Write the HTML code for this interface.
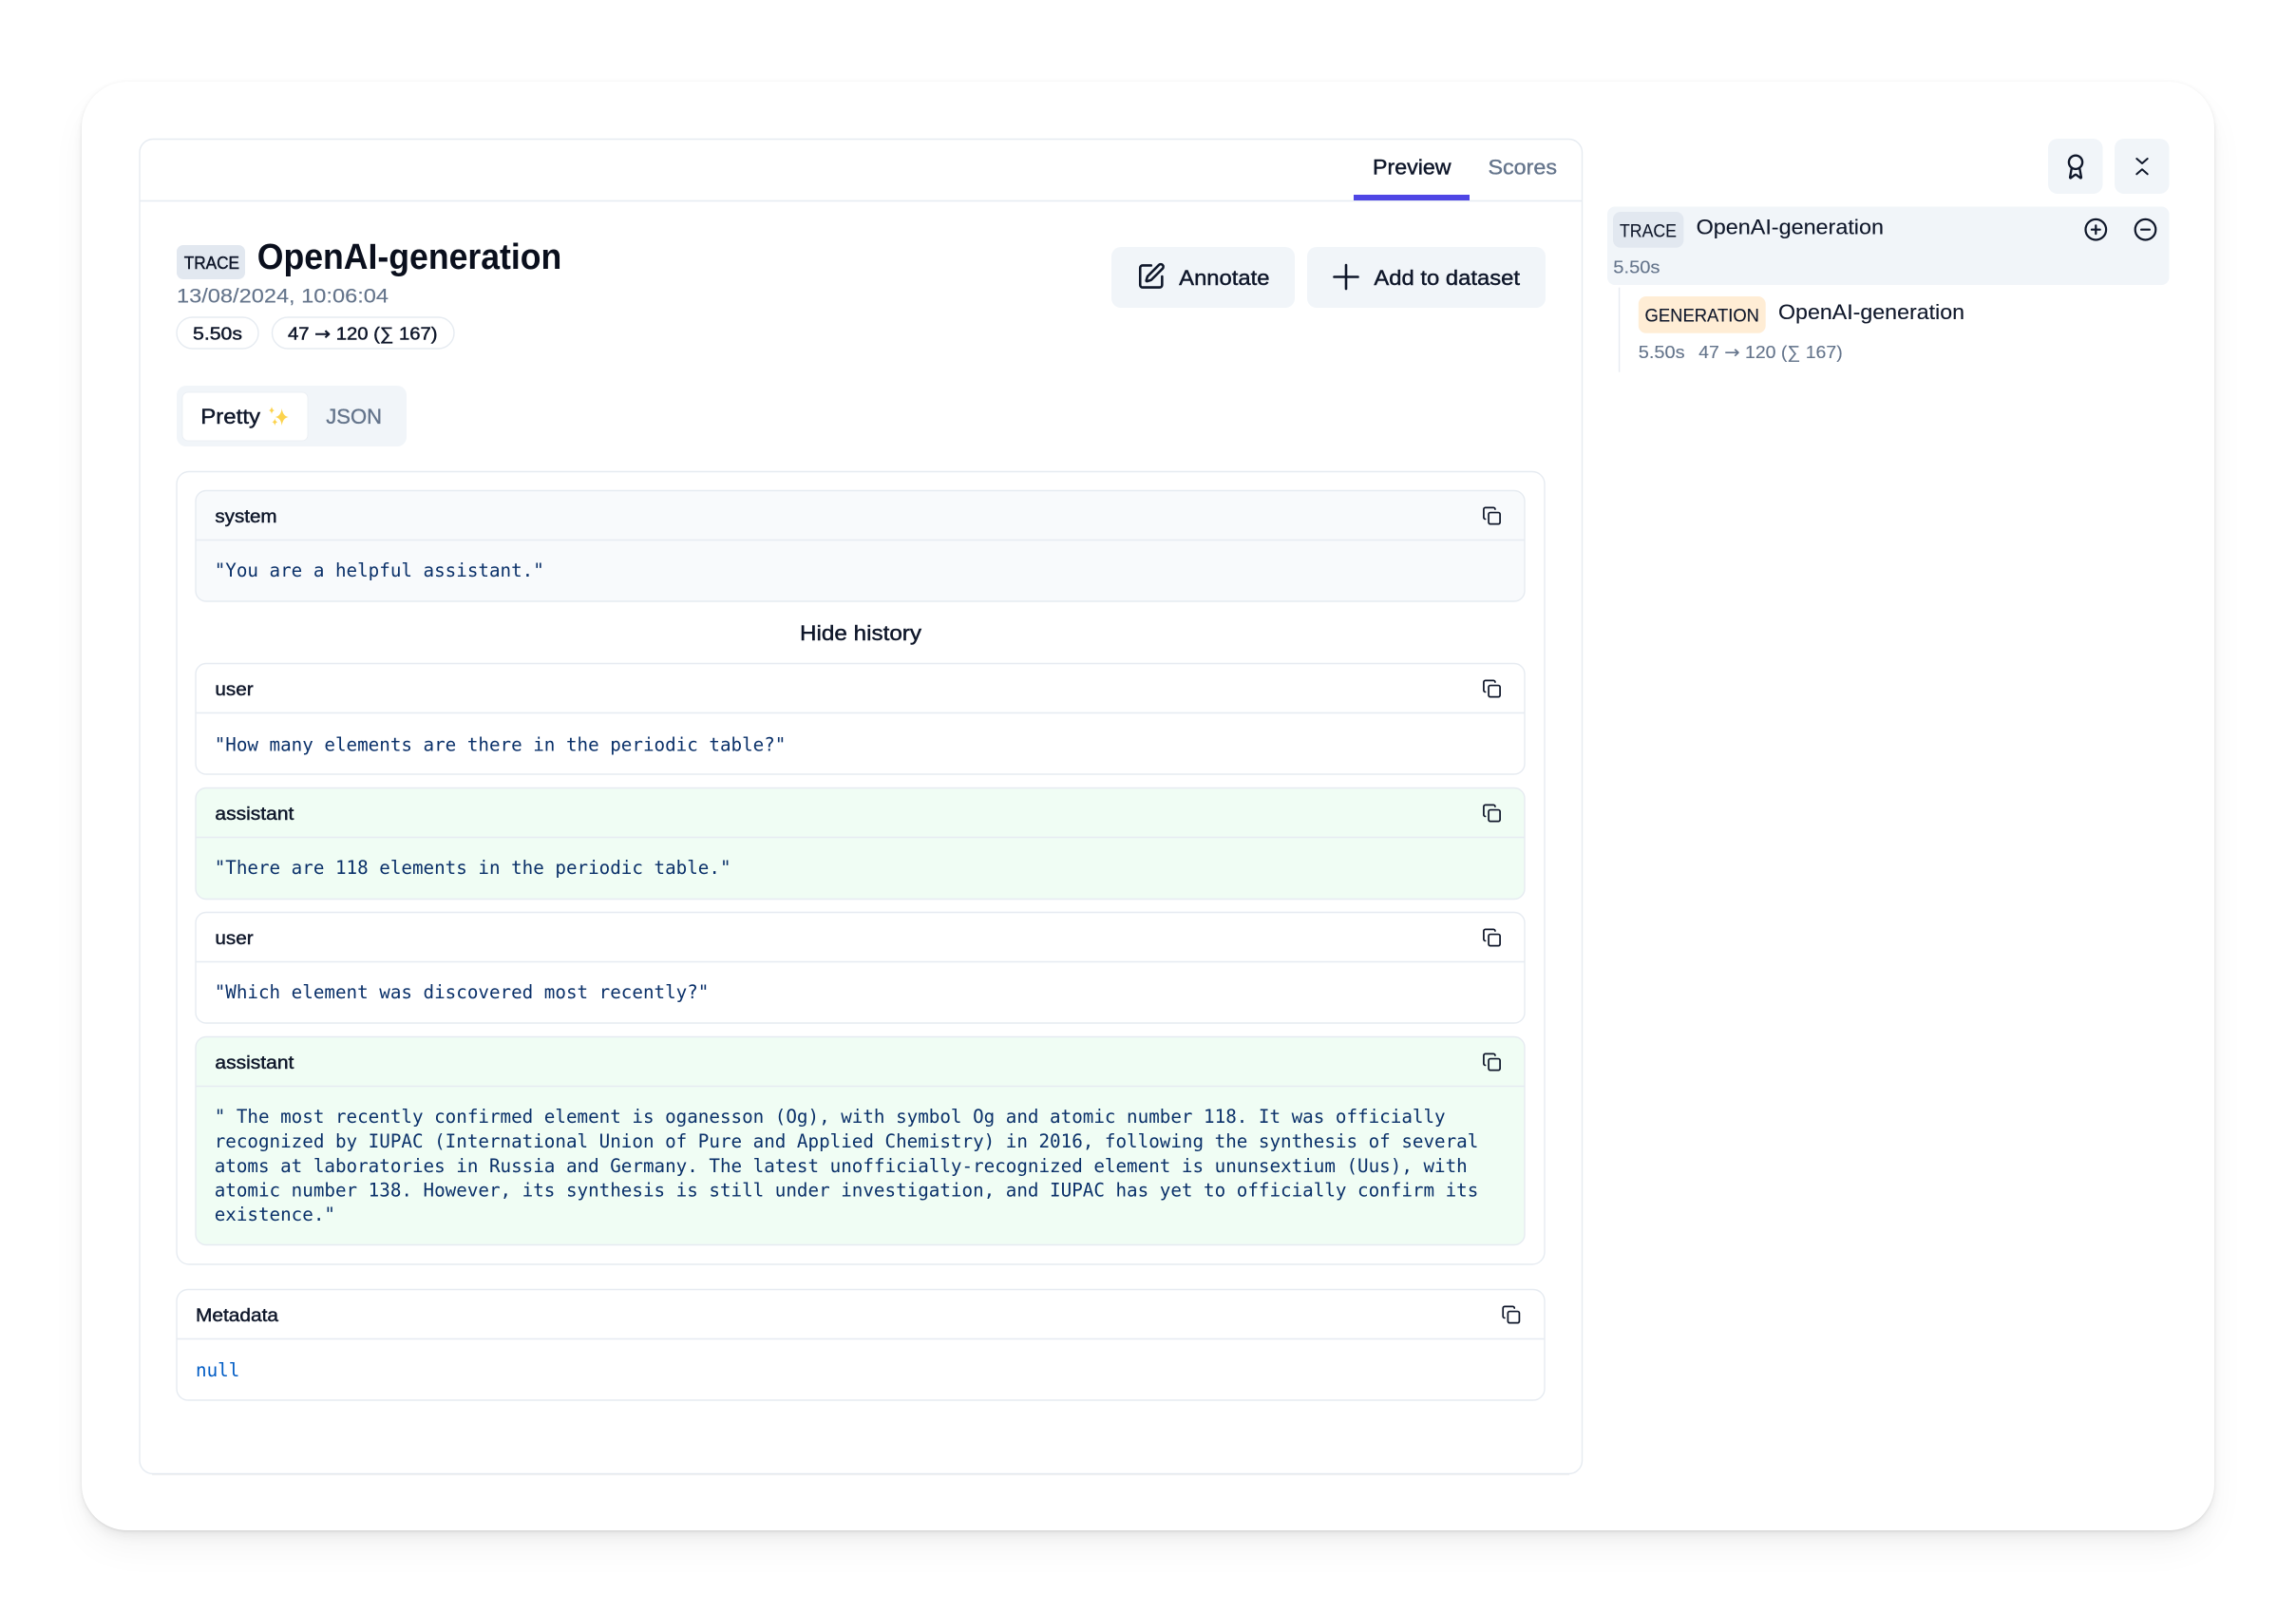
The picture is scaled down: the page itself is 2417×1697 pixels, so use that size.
<!DOCTYPE html>
<html lang="en"><head><meta charset="utf-8"><title>Trace</title>
<style>
html,body{margin:0;padding:0;background:#fff;width:2417px;height:1697px;overflow:hidden}
#card{position:absolute;left:86px;top:86px;width:2245px;height:1525px;border-radius:48px;background:#fff;box-shadow:0 1px 2px rgba(0,0,0,.07),0 0 6px rgba(0,0,0,.035),0 7px 12px -2px rgba(0,0,0,.07),0 20px 40px -4px rgba(0,0,0,.05)}
svg{position:absolute;left:0;top:0}
text{font-family:"Liberation Sans",sans-serif;fill:#0f172a;font-size:22.4px;stroke:#0f172a;stroke-width:.12px}
.m{stroke:#0f172a;stroke-width:.45px}
.s{font-size:18.5px}
.l{font-size:19.2px}
.d{font-size:21.6px}
.g{fill:#64748b;stroke:#64748b}
.gm{fill:#64748b;stroke:#64748b;stroke-width:.35px}
.c{font-family:"DejaVu Sans Mono","Liberation Mono",monospace;font-size:19.23px;fill:#0a3069;stroke:none}
.n{fill:#005cc5}
.a{font-family:"DejaVu Sans",sans-serif}
.box{fill:#fff;stroke:#e6ebf1;stroke-width:1.4}
.line{stroke:#e6ebf1;stroke-width:1.4}
.ic{fill:none;stroke:#0f172a;stroke-width:2;stroke-linecap:round;stroke-linejoin:round}
</style></head><body>
<div id="card"></div>
<svg width="2417" height="1697" viewBox="0 0 2417 1697" xmlns="http://www.w3.org/2000/svg">
<defs>
<g id="copy"><g transform="scale(.86) translate(-12 -12)" class="ic"><rect x="8" y="8" width="14" height="14" rx="2"/><path d="M4 16c-1.100 0-2-.9-2-2V4c0-1.100.9-2 2-2h10c1.100 0 2 .9 2 2"/></g></g>
</defs>

<!-- main panel -->
<rect class="box" x="147" y="146.500" width="1518.500" height="1405" rx="14"/>
<line x1="160" y1="1552.500" x2="1652" y2="1552.500" stroke="#000" stroke-opacity=".035" stroke-width="1.500"/>
<line class="line" x1="147" y1="211.500" x2="1665.500" y2="211.500"/>
<rect x="1425" y="205" width="122" height="6" fill="#4f46e5"/>
<text class="m" x="1445" y="183.500" textLength="82.500" lengthAdjust="spacingAndGlyphs">Preview</text>
<text class="gm" x="1566.500" y="183.500" textLength="72.500" lengthAdjust="spacingAndGlyphs">Scores</text>

<!-- heading -->
<rect x="186" y="258" width="72" height="36" rx="7" fill="#e2e8f0"/>
<text class="m s" x="193.700" y="283" textLength="58.300" lengthAdjust="spacingAndGlyphs">TRACE</text>
<text x="270.800" y="283" style="font-size:38px;font-weight:700;fill:#0a0f1d;stroke:none" textLength="320.500" lengthAdjust="spacingAndGlyphs">OpenAI-generation</text>
<text class="g d" x="186" y="318.700" textLength="223" lengthAdjust="spacingAndGlyphs">13/08/2024, 10:06:04</text>
<rect class="box" x="186" y="334" width="86" height="33" rx="16.500"/>
<text class="m s" x="203" y="357.700" textLength="52" lengthAdjust="spacingAndGlyphs">5.50s</text>
<rect class="box" x="286.500" y="334" width="191.500" height="33" rx="16.500"/>
<text class="m s" x="303" y="357.700" textLength="157.500" lengthAdjust="spacingAndGlyphs">47 <tspan class="a">→</tspan> 120 (∑ 167)</text>

<!-- buttons -->
<rect x="1170" y="260" width="193" height="64" rx="10" fill="#f1f5f9"/>
<g transform="translate(1196.400 275.600) scale(1.283)" class="ic"><path d="M12 3H5a2 2 0 0 0-2 2v14a2 2 0 0 0 2 2h14a2 2 0 0 0 2-2v-7"/><path d="M18.375 2.625a1 1 0 0 1 3 3l-9.013 9.014a2 2 0 0 1-.853.505l-2.873.84a.5.5 0 0 1-.62-.62l.84-2.873a2 2 0 0 1 .506-.852z"/></g>
<text class="m" x="1241.200" y="300" textLength="95.300" lengthAdjust="spacingAndGlyphs">Annotate</text>
<rect x="1376" y="260" width="251" height="64" rx="10" fill="#f1f5f9"/>
<path d="M1404.500 291.500h25M1417 279v25" class="ic" style="stroke-width:2.600"/>
<text class="m" x="1446.400" y="300" textLength="153.600" lengthAdjust="spacingAndGlyphs">Add to dataset</text>

<!-- pretty / json -->
<rect x="186" y="406" width="242" height="64" rx="10" fill="#f1f5f9"/>
<rect x="192" y="413" width="132" height="51" rx="6" fill="#fff" stroke="#e9edf2" stroke-width=".8"/>
<text class="m" x="211.300" y="446" textLength="62.700" lengthAdjust="spacingAndGlyphs">Pretty</text>
<g fill="#fcd34d"><path d="M296.700 430q1 8 7 9q-6 1-7 9q-1-8-7-9q6-1 7-9z"/><path d="M286 428q.5 3.500 3 4q-2.500.5-3 4q-.5-3.500-3-4q2.500-.5 3-4z"/><path d="M289.300 440.500q.5 3.300 3 3.800q-2.500.5-3 3.800q-.5-3.300-3-3.800q2.500-.5 3-3.800z"/></g>
<text class="gm" x="343.300" y="446" textLength="58.700" lengthAdjust="spacingAndGlyphs">JSON</text>

<!-- messages -->
<rect class="box" x="186" y="496.500" width="1440" height="834.500" rx="13"/>

<rect x="206" y="516.500" width="1399" height="116.500" rx="11" fill="#f8fafc" stroke="#e6ebf1" stroke-width="1.400"/>
<line class="line" x1="206" y1="568.500" x2="1605" y2="568.500"/>
<text class="m l" x="226.400" y="550" textLength="65.200" lengthAdjust="spacingAndGlyphs">system</text>
<text class="c" x="225.700" y="607">"You are a helpful assistant."</text>
<use href="#copy" x="1570.500" y="543"/>

<text class="m" x="842" y="674" textLength="128" lengthAdjust="spacingAndGlyphs">Hide history</text>

<rect class="box" x="206" y="698.500" width="1399" height="116.500" rx="11"/>
<line class="line" x1="206" y1="750.500" x2="1605" y2="750.500"/>
<text class="m l" x="226.400" y="732" textLength="40.200" lengthAdjust="spacingAndGlyphs">user</text>
<text class="c" x="225.700" y="790.300">"How many elements are there in the periodic table?"</text>
<use href="#copy" x="1570.500" y="725"/>

<rect x="206" y="829.500" width="1399" height="117" rx="11" fill="#f0fdf4" stroke="#e6ebf1" stroke-width="1.400"/>
<line class="line" x1="206" y1="881.500" x2="1605" y2="881.500"/>
<text class="m l" x="226.400" y="863" textLength="83" lengthAdjust="spacingAndGlyphs">assistant</text>
<text class="c" x="225.700" y="919.800">"There are 118 elements in the periodic table."</text>
<use href="#copy" x="1570.500" y="856"/>

<rect class="box" x="206" y="960.500" width="1399" height="116.500" rx="11"/>
<line class="line" x1="206" y1="1012.500" x2="1605" y2="1012.500"/>
<text class="m l" x="226.400" y="994" textLength="40.200" lengthAdjust="spacingAndGlyphs">user</text>
<text class="c" x="225.700" y="1051.200">"Which element was discovered most recently?"</text>
<use href="#copy" x="1570.500" y="987"/>

<rect x="206" y="1091.500" width="1399" height="219" rx="11" fill="#f0fdf4" stroke="#e6ebf1" stroke-width="1.400"/>
<line class="line" x1="206" y1="1143.500" x2="1605" y2="1143.500"/>
<text class="m l" x="226.400" y="1125" textLength="83" lengthAdjust="spacingAndGlyphs">assistant</text>
<text class="c" x="225.700" y="1182">" The most recently confirmed element is oganesson (Og), with symbol Og and atomic number 118. It was officially</text>
<text class="c" x="225.700" y="1208">recognized by IUPAC (International Union of Pure and Applied Chemistry) in 2016, following the synthesis of several</text>
<text class="c" x="225.700" y="1234">atoms at laboratories in Russia and Germany. The latest unofficially-recognized element is ununsextium (Uus), with</text>
<text class="c" x="225.700" y="1259.500">atomic number 138. However, its synthesis is still under investigation, and IUPAC has yet to officially confirm its</text>
<text class="c" x="225.700" y="1285">existence."</text>
<use href="#copy" x="1570.500" y="1118"/>

<!-- metadata -->
<rect class="box" x="186" y="1357.500" width="1440" height="116.500" rx="12"/>
<line class="line" x1="186" y1="1409.500" x2="1626" y2="1409.500"/>
<text class="m l" x="206" y="1391" textLength="87" lengthAdjust="spacingAndGlyphs">Metadata</text>
<text class="c n" x="206" y="1449">null</text>
<use href="#copy" x="1590.800" y="1384"/>

<!-- right panel -->
<rect x="2156" y="146" width="57.500" height="58" rx="10" fill="#f1f5f9"/>
<g transform="translate(2170.800 161.300) scale(1.185)" class="ic"><path d="m15.477 12.890 1.515 8.526a.5.5 0 0 1-.810.470l-3.580-2.687a1 1 0 0 0-1.197 0l-3.586 2.686a.5.5 0 0 1-.810-.469l1.514-8.526"/><circle cx="12" cy="8" r="6"/></g>
<rect x="2226" y="146" width="57.500" height="58" rx="10" fill="#f1f5f9"/>
<path d="M2249.300 167l5.700 5 5.700-5M2249.300 183.300l5.700-5 5.700 5" class="ic"/>

<rect x="1692" y="217.500" width="591.500" height="82.500" rx="8" fill="#f1f5f9"/>
<rect x="1698" y="223" width="74.400" height="37.700" rx="8" fill="#e2e8f0"/>
<text x="1705" y="249.300" style="font-size:19px" textLength="60" lengthAdjust="spacingAndGlyphs">TRACE</text>
<text x="1785.600" y="246.700" textLength="197.400" lengthAdjust="spacingAndGlyphs">OpenAI-generation</text>
<text class="g s" x="1698.300" y="287.700" textLength="49.200" lengthAdjust="spacingAndGlyphs">5.50s</text>
<g class="ic" style="stroke-width:2.200"><circle cx="2206.300" cy="241.700" r="10.800"/><path d="M2201.900 241.700h8.800M2206.300 237.300v8.800"/><circle cx="2258.500" cy="241.700" r="10.800"/><path d="M2254.100 241.700h8.800"/></g>

<line class="line" x1="1704.600" y1="302.700" x2="1704.600" y2="391.700"/>
<rect x="1724.800" y="312" width="133.900" height="38.700" rx="8" fill="#ffedd5"/>
<text x="1731.500" y="338.700" style="font-size:19px" textLength="120.500" lengthAdjust="spacingAndGlyphs">GENERATION</text>
<text x="1872" y="336" textLength="196" lengthAdjust="spacingAndGlyphs">OpenAI-generation</text>
<text class="g s" x="1724.800" y="376.800" textLength="48.800" lengthAdjust="spacingAndGlyphs">5.50s</text>
<text class="g s" x="1788.200" y="376.800" textLength="151.500" lengthAdjust="spacingAndGlyphs">47 <tspan class="a">→</tspan> 120 (∑ 167)</text>
</svg>
</body></html>
